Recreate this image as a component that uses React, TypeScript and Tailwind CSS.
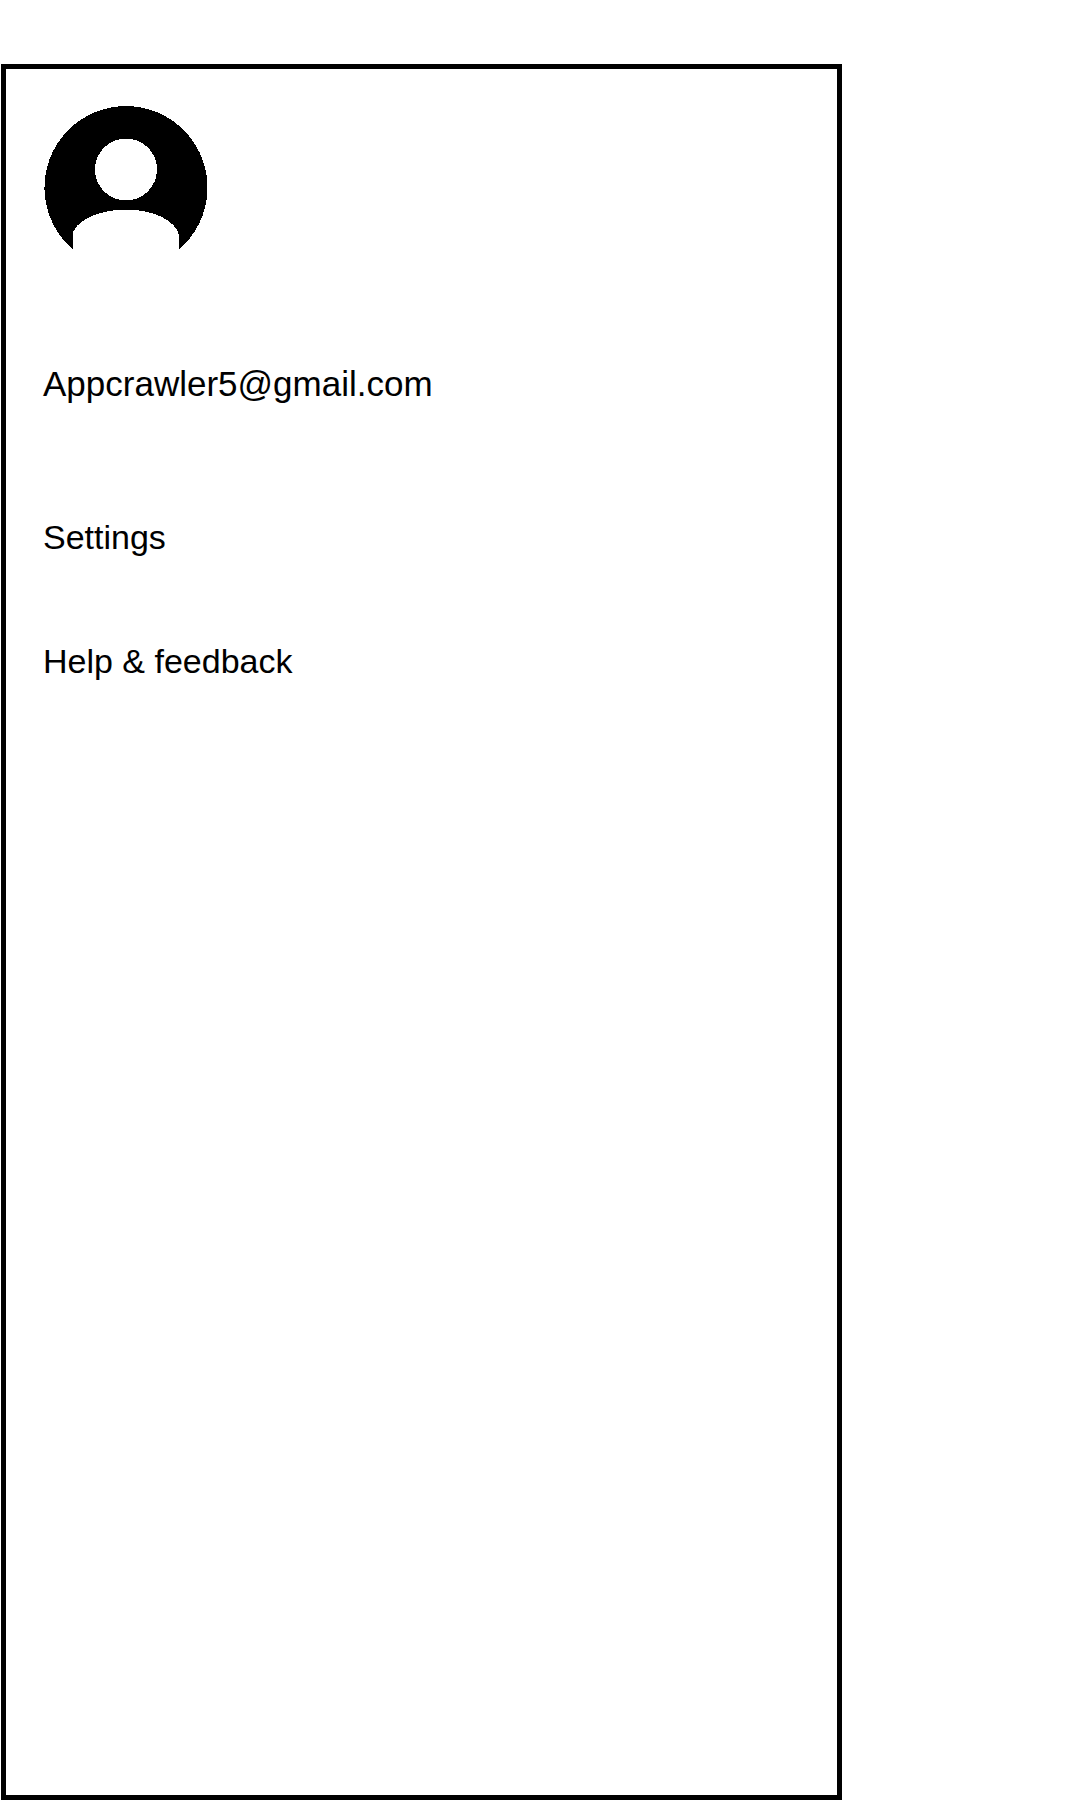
const menuItems = ["Settings", "Help & feedback"];

function Avatar() {
  return (
    <svg
      width="166"
      height="145"
      viewBox="0 0 166 145"
      fill="black"
      role="img"
      aria-label="Profile picture"
      shapeRendering="crispEdges"
    >
      <path
        fillRule="evenodd"
        d="M30 144.5A81.500 81.500 0 1 1 136 144.500V131C134 116 111 104.500 82.500 104.500C55 104.500 29.500 117 29.500 131L30 133ZM114 64.500A31 31 0 1 0 52 64.500A31 31 0 1 0 114 64.500Z"
      />
    </svg>
  );
}

export default function App() {
  return (
    <div className="flex min-h-screen bg-white px-px pt-16 font-['Liberation_Sans',Arial,sans-serif] text-black">
      <aside className="w-[78%] border-5 border-black px-[37px] pt-9">
        <Avatar />
        <p className="mt-[114px] text-[35px] leading-10">Appcrawler5@gmail.com</p>
        <nav className="mt-[113px] flex flex-col items-start gap-[84px]">
          {menuItems.map((item) => (
            <a key={item} href="#" className="text-[34px] leading-10">
              {item}
            </a>
          ))}
        </nav>
      </aside>
    </div>
  );
}
